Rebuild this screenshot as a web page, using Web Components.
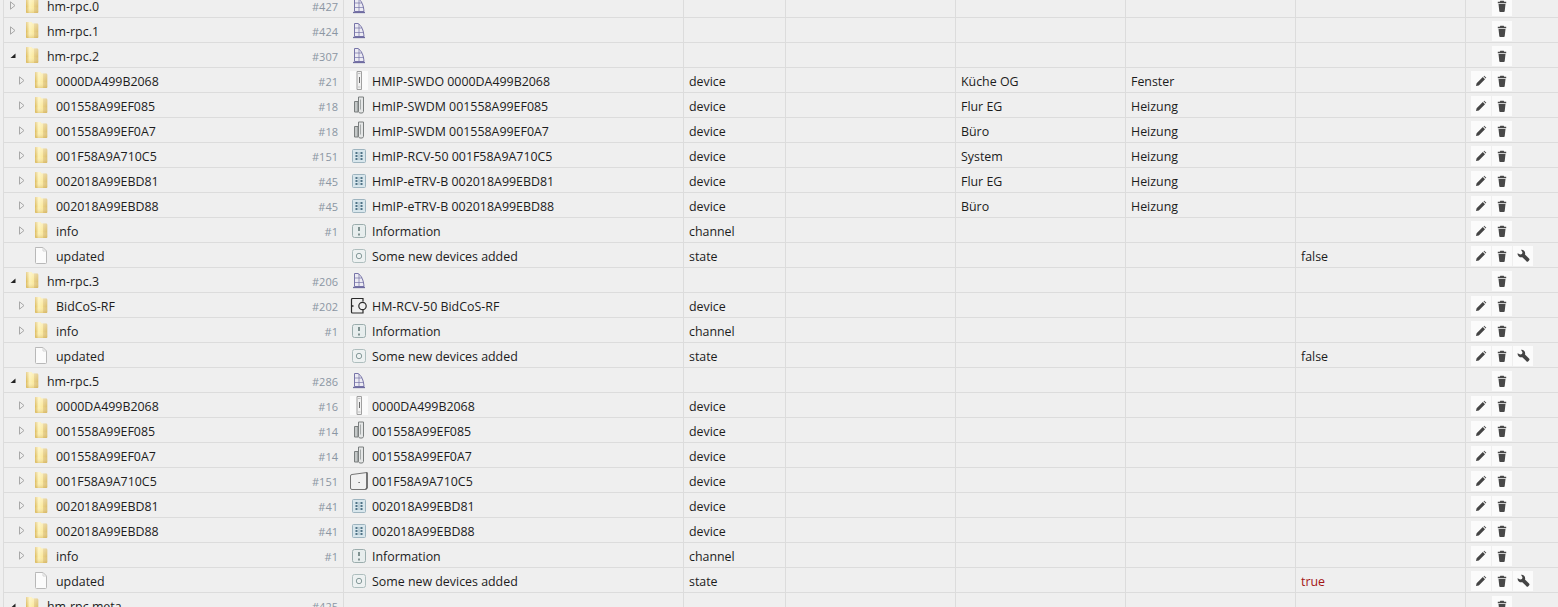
<!DOCTYPE html>
<html lang="de"><head><meta charset="utf-8"><title>Objekte</title>
<style>
html,body{margin:0;padding:0;height:607px;overflow:hidden;background:#efefef}
</style></head><body>
<object-table>
<object-row level="0" state="closed" num="#427" dev="adapter" actions="d"><span slot="name">hm-rpc.0</span></object-row>
<object-row level="0" state="closed" num="#424" dev="adapter" actions="d"><span slot="name">hm-rpc.1</span></object-row>
<object-row level="0" state="open" num="#307" dev="adapter" actions="d"><span slot="name">hm-rpc.2</span></object-row>
<object-row level="1" state="closed" num="#21" dev="swdo" actions="ed"><span slot="name">0000DA499B2068</span><span slot="title">HMIP-SWDO 0000DA499B2068</span><span slot="role">device</span><span slot="room">Küche OG</span><span slot="func">Fenster</span></object-row>
<object-row level="1" state="closed" num="#18" dev="swdm" actions="ed"><span slot="name">001558A99EF085</span><span slot="title">HmIP-SWDM 001558A99EF085</span><span slot="role">device</span><span slot="room">Flur EG</span><span slot="func">Heizung</span></object-row>
<object-row level="1" state="closed" num="#18" dev="swdm" actions="ed"><span slot="name">001558A99EF0A7</span><span slot="title">HmIP-SWDM 001558A99EF0A7</span><span slot="role">device</span><span slot="room">Büro</span><span slot="func">Heizung</span></object-row>
<object-row level="1" state="closed" num="#151" dev="grid" actions="ed"><span slot="name">001F58A9A710C5</span><span slot="title">HmIP-RCV-50 001F58A9A710C5</span><span slot="role">device</span><span slot="room">System</span><span slot="func">Heizung</span></object-row>
<object-row level="1" state="closed" num="#45" dev="grid" actions="ed"><span slot="name">002018A99EBD81</span><span slot="title">HmIP-eTRV-B 002018A99EBD81</span><span slot="role">device</span><span slot="room">Flur EG</span><span slot="func">Heizung</span></object-row>
<object-row level="1" state="closed" num="#45" dev="grid" actions="ed"><span slot="name">002018A99EBD88</span><span slot="title">HmIP-eTRV-B 002018A99EBD88</span><span slot="role">device</span><span slot="room">Büro</span><span slot="func">Heizung</span></object-row>
<object-row level="1" state="closed" num="#1" dev="info" actions="ed"><span slot="name">info</span><span slot="title">Information</span><span slot="role">channel</span></object-row>
<object-row level="1" state="file" dev="state" actions="edw"><span slot="name">updated</span><span slot="title">Some new devices added</span><span slot="role">state</span><span slot="value">false</span></object-row>
<object-row level="0" state="open" num="#206" dev="adapter" actions="d"><span slot="name">hm-rpc.3</span></object-row>
<object-row level="1" state="closed" num="#202" dev="bidcos" actions="ed"><span slot="name">BidCoS-RF</span><span slot="title">HM-RCV-50 BidCoS-RF</span><span slot="role">device</span></object-row>
<object-row level="1" state="closed" num="#1" dev="info" actions="ed"><span slot="name">info</span><span slot="title">Information</span><span slot="role">channel</span></object-row>
<object-row level="1" state="file" dev="state" actions="edw"><span slot="name">updated</span><span slot="title">Some new devices added</span><span slot="role">state</span><span slot="value">false</span></object-row>
<object-row level="0" state="open" num="#286" dev="adapter" actions="d"><span slot="name">hm-rpc.5</span></object-row>
<object-row level="1" state="closed" num="#16" dev="swdo" actions="ed"><span slot="name">0000DA499B2068</span><span slot="title">0000DA499B2068</span><span slot="role">device</span></object-row>
<object-row level="1" state="closed" num="#14" dev="swdm" actions="ed"><span slot="name">001558A99EF085</span><span slot="title">001558A99EF085</span><span slot="role">device</span></object-row>
<object-row level="1" state="closed" num="#14" dev="swdm" actions="ed"><span slot="name">001558A99EF0A7</span><span slot="title">001558A99EF0A7</span><span slot="role">device</span></object-row>
<object-row level="1" state="closed" num="#151" dev="rcv" actions="ed"><span slot="name">001F58A9A710C5</span><span slot="title">001F58A9A710C5</span><span slot="role">device</span></object-row>
<object-row level="1" state="closed" num="#41" dev="grid" actions="ed"><span slot="name">002018A99EBD81</span><span slot="title">002018A99EBD81</span><span slot="role">device</span></object-row>
<object-row level="1" state="closed" num="#41" dev="grid" actions="ed"><span slot="name">002018A99EBD88</span><span slot="title">002018A99EBD88</span><span slot="role">device</span></object-row>
<object-row level="1" state="closed" num="#1" dev="info" actions="ed"><span slot="name">info</span><span slot="title">Information</span><span slot="role">channel</span></object-row>
<object-row level="1" state="file" dev="state" actions="edw"><span slot="name">updated</span><span slot="title">Some new devices added</span><span slot="role">state</span><span slot="value" style="color:#a31515">true</span></object-row>
<object-row level="0" state="open" num="#425" actions="d"><span slot="name">hm-rpc.meta</span></object-row>
</object-table>
<script>
const DEV={
adapter:`<svg width="14" height="18" viewBox="0 0 14 18" fill="none" stroke="#7774a8"><path d="M2.500 1.500h3.500c3.500 2 5.500 6.500 6 13H2.500z" fill="#ecebf3"/><path d="M2.500 6h7.500M2.500 10.500h9M7 2v12.500" stroke-width=".7"/><path d="M1 15.500h12" stroke-width="1.300" stroke="#6f6ca0"/></svg>`,
swdo:`<svg width="18" height="19" viewBox="0 0 18 19" style="background:#fafafa"><path d="M7 .5h4.500v18H7z" fill="#f1f1f1" stroke="#a0a0a0"/><path d="M8 2.500h2.500M8 16h2.500" stroke="#c4c4c4"/><path d="M9.500 6v6" stroke="#6a6a6a"/></svg>`,
swdm:`<svg width="14" height="19" viewBox="0 0 14 19" fill="#e4e6e6" stroke="#7a7e7e"><path d="M6.500 1h5v14.500l-1 1.500h-3l-1-1.500z"/><path d="M2.500 5.500h3.500v10.500H2.500z" fill="#c4c8c8"/><path d="M8.500 3.500v10" stroke="#a5a9a9"/></svg>`,
grid:`<svg width="16" height="16" viewBox="0 0 16 16"><rect x="1.500" y="1.500" width="13" height="13" rx="1" fill="#d8e6ec" stroke="#9db4bf"/><g fill="#4f7386"><rect x="4.500" y="4" width="2" height="2"/><rect x="9.500" y="4" width="2" height="2"/><rect x="4.500" y="7" width="2" height="2"/><rect x="9.500" y="7" width="2" height="2"/><rect x="4.500" y="10" width="2" height="2"/><rect x="9.500" y="10" width="2" height="2"/></g><path d="M7.500 4h1v8h-1z" fill="#9fb9c5"/></svg>`,
info:`<svg width="16" height="16" viewBox="0 0 16 16"><rect x="1.500" y="1.500" width="13" height="13" rx="2" fill="#e7eded" stroke="#9badad"/><path d="M8 4v4M8 10.500v2" stroke="#47605f" stroke-width="1.300"/></svg>`,
state:`<svg width="16" height="16" viewBox="0 0 16 16"><rect x="1.500" y="1.500" width="13" height="13" rx="2" fill="#edf1f1" stroke="#aebebe"/><circle cx="8" cy="8" r="2.700" fill="none" stroke="#869a9a"/></svg>`,
bidcos:`<svg width="18" height="18" viewBox="0 0 18 18" fill="none" stroke="#2a2a2a" stroke-width="1.200"><path d="M13 4.500V1.500H2.500a1 1 0 0 0-1 1V15a1 1 0 0 0 1 1H13v-3"/><circle cx="12.500" cy="9" r="3.700"/><path d="M1 9h2.500" stroke-width="1.500"/></svg>`,
rcv:`<svg width="20" height="20" viewBox="0 0 20 20"><path d="M3 3.500 18 1.500v15.500l-1.500 1.500H3a1.500 1.500 0 0 1-1.500-1.500V5A1.500 1.500 0 0 1 3 3.500z" fill="#f1f1f1" stroke="#757575"/><path d="M18 1.500v15.500l-1.500 1.500" fill="none" stroke="#5a5a5a" stroke-width="1.400"/><path d="M9.500 11.500h1.200" stroke="#444"/></svg>`
};
const ACT={
e:`<svg width="12" height="12" viewBox="0 0 12 12"><path d="M1 11l.6-2.800L7.800 2l2.200 2.200-6.200 6.200zM8.500 1.300l.7-.6 2.100 2.100-.6.700z" fill="#444"/></svg>`,
d:`<svg width="12" height="12" viewBox="0 0 12 12"><path d="M4.300 .8h3.400l.5 1h2v1.400H1.800V1.800h2zM2.500 4h7l-.8 7.200a.9.900 0 0 1-.9.800H4.200a.9.900 0 0 1-.9-.8z" fill="#484848"/></svg>`,
w:`<svg width="14" height="14" viewBox="0 0 14 14"><path d="M5 .8a3.700 3.700 0 0 1 4 4.700l4 4.100a1.300 1.300 0 0 1 0 1.900l-.7.700a1.300 1.300 0 0 1-1.900 0l-4.100-4a3.700 3.700 0 0 1-4.700-4L4.200 5.500 6 5 6.500 3.200z" fill="#444"/></svg>`
};
const FOLDER=`<svg width="14" height="18" viewBox="0 0 14 18"><defs><linearGradient id="f" x1="0" x2="1" y1="0" y2="0"><stop offset="0" stop-color="#dcb95a"/><stop offset=".3" stop-color="#fdf2b6"/><stop offset=".62" stop-color="#fbe99e"/><stop offset=".66" stop-color="#e8d08a"/><stop offset="1" stop-color="#dcc072"/></linearGradient><linearGradient id="g" x1="0" x2="0" y1="0" y2="1"><stop offset="0" stop-color="#fff" stop-opacity=".35"/><stop offset=".6" stop-color="#fff" stop-opacity="0"/><stop offset="1" stop-color="#c79e3c" stop-opacity=".35"/></linearGradient></defs><path d="M1.500 1h5l1 1.500h4.500a1.300 1.300 0 0 1 1.300 1.300V16a1 1 0 0 1-1 1H2a1 1 0 0 1-1-1V1.500a.5.500 0 0 1 .5-.5z" fill="url(#f)"/><path d="M1.500 1h5l1 1.500h4.500a1.300 1.300 0 0 1 1.300 1.300V16a1 1 0 0 1-1 1H2a1 1 0 0 1-1-1V1.500a.5.500 0 0 1 .5-.5z" fill="url(#g)"/></svg>`;
const FILE=`<svg width="14" height="17" viewBox="0 0 14 17"><path d="M1.500 .5h7.500l3.500 3.500v11.500a1 1 0 0 1-1 1h-9a1 1 0 0 1-1-1V1.500a1 1 0 0 1 1-1z" fill="#fbfbfb" stroke="#b8b8b8"/><path d="M9 .5V4h3.500" fill="none" stroke="#d4d4d4"/></svg>`;
const tpl=s=>{const t=document.createElement('template');t.innerHTML=s;return t;};

customElements.define('object-table',class extends HTMLElement{
 constructor(){super();this.attachShadow({mode:'open'}).appendChild(tpl(`<style>
 :host{display:block;height:607px;overflow:hidden;padding-left:3px;font:12.400px/28px "Open Sans",sans-serif;color:#1c1c1c;background:#efefef}
 .rows{margin-top:-7px;display:flex;flex-direction:column;border-left:1px solid #dcdcdc}
 </style><div class="rows"><slot></slot></div>`).content.cloneNode(true));}
});
customElements.define('tree-toggle',class extends HTMLElement{
 constructor(){super();const o=this.getAttribute('state');this.attachShadow({mode:'open'}).innerHTML=`<style>:host{display:flex;width:15px;height:24px;align-items:center;flex:none}svg{display:block}</style>`+(o==='open'?`<svg width="7" height="6" viewBox="0 0 7 6" style="margin-top:2px"><path d="M.5 5 5.500 .5V5z" fill="#222"/></svg>`:o==='closed'?`<svg width="7" height="9" viewBox="0 0 7 9"><path d="M.5 .8 5 4.500 .5 8.200z" fill="none" stroke="#a8a8a8"/></svg>`:'');}
});
customElements.define('tree-icon',class extends HTMLElement{
 constructor(){super();const k=this.getAttribute('kind');this.attachShadow({mode:'open'}).innerHTML=`<style>:host{display:flex;width:22px;height:24px;align-items:center;flex:none}svg{display:block}</style>`+(k==='file'?FILE:FOLDER);}
});
customElements.define('dev-icon',class extends HTMLElement{
 constructor(){super();this.attachShadow({mode:'open'}).innerHTML=`<style>:host{display:flex;width:22px;height:24px;box-sizing:border-box;padding-top:1px;align-items:center;justify-content:center;flex:none;overflow:hidden}svg{display:block;flex:none}</style>`+(DEV[this.getAttribute('kind')]||'');}
});
customElements.define('action-button',class extends HTMLElement{
 constructor(){super();this.attachShadow({mode:'open'}).innerHTML=`<style>:host{display:flex;width:20px;height:20px;align-items:center;justify-content:center;background:#fbfbfb;flex:none}svg{display:block}</style>`+ACT[this.getAttribute('kind')];}
});
customElements.define('object-row',class extends HTMLElement{
 constructor(){super();
  const lvl=+this.getAttribute('level'),st=this.getAttribute('state'),num=this.getAttribute('num')||'',dev=this.getAttribute('dev'),acts=this.getAttribute('actions')||'';
  const kind=st==='file'?'file':'folder';
  const slotsBtn=['e','d','w'].map(a=>acts.includes(a)?`<action-button kind="${a}"></action-button>`:`<i></i>`).join('');
  this.attachShadow({mode:'open'}).innerHTML=`<style>
  :host{display:grid;flex:none;height:25px;box-sizing:border-box;border-bottom:1px solid #dcdcdc;grid-template-columns:340px 340px 102px 170px 170px 170px 170px 1fr}
  .c{border-right:1px solid #dcdcdc;height:24px;min-width:0;white-space:nowrap;overflow:hidden;box-sizing:border-box;padding-left:5px}
  .tree{display:flex;align-items:flex-start;padding-left:${lvl?15:6}px}
  .nm{flex:1;min-width:0}
  .num{font-size:11px;color:#8b96a3;padding-right:5px}
  .t{display:flex;padding-left:4px}
  .t span{padding-left:2px}
  .acts{border:0;display:flex;gap:1px;align-items:center;padding:1px 0 0 5px;overflow:visible}
  i{width:20px;flex:none}
  </style>
  <div class="c tree"><tree-toggle state="${st}"></tree-toggle><tree-icon kind="${kind}"></tree-icon><div class="nm"><slot name="name"></slot></div><div class="num">${num}</div></div>
  <div class="c t">${dev?`<dev-icon kind="${dev}"></dev-icon>`:''}<span><slot name="title"></slot></span></div>
  <div class="c"><slot name="role"></slot></div>
  <div class="c"></div>
  <div class="c"><slot name="room"></slot></div>
  <div class="c"><slot name="func"></slot></div>
  <div class="c"><slot name="value"></slot></div>
  <div class="c acts">${slotsBtn}</div>`;
 }
});
</script>
</body></html>
